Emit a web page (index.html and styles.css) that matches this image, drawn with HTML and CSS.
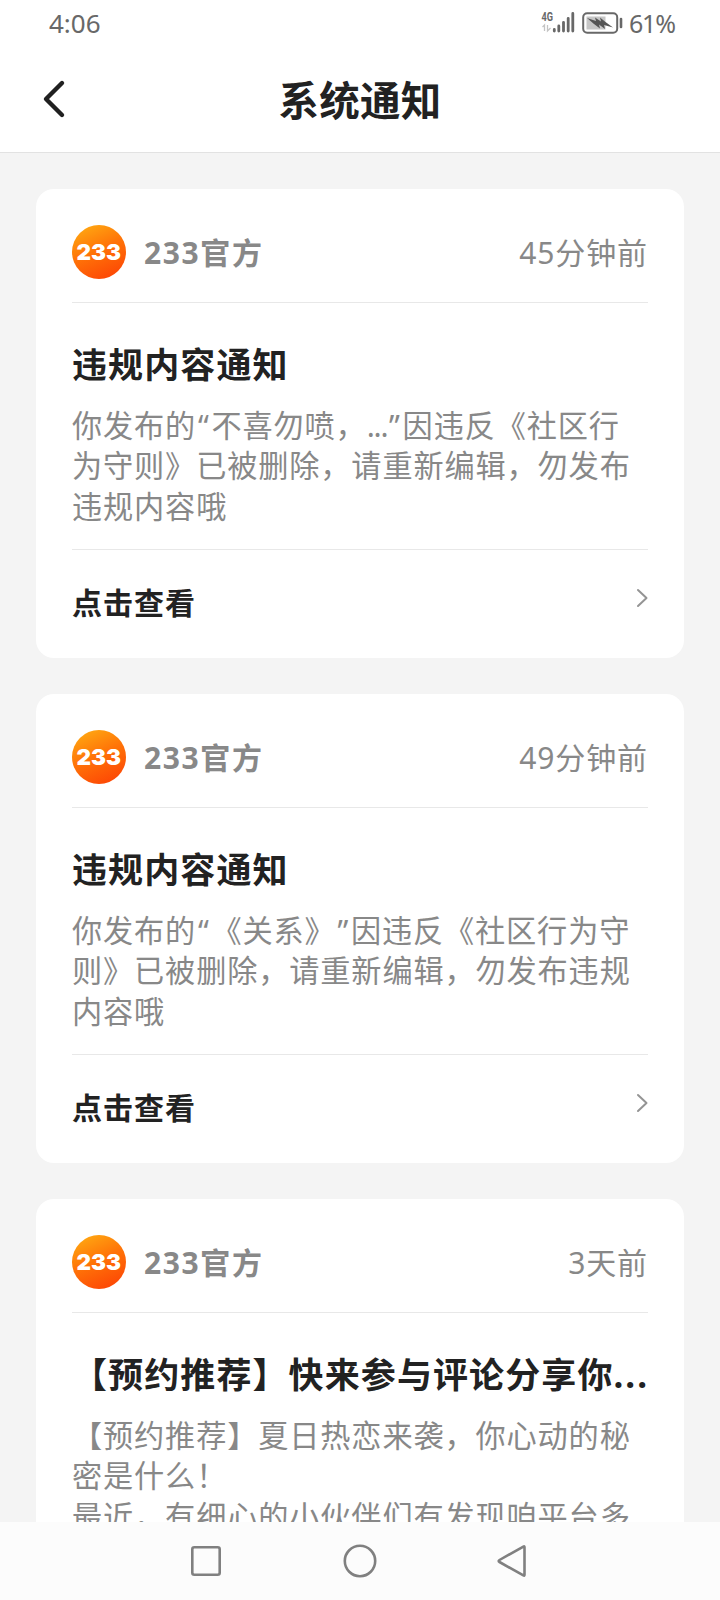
FILE: index.html
```html
<!DOCTYPE html>
<html lang="zh-CN">
<head>
<meta charset="utf-8">
<title>系统通知</title>
<link rel="stylesheet" href="styles.css">
</head>
<body>
<svg width="0" height="0" class="defs">
  <defs>
    <linearGradient id="orange" x1="0.15" y1="0" x2="0.6" y2="1">
      <stop offset="0" stop-color="#ffab12"/>
      <stop offset="0.5" stop-color="#ff7408"/>
      <stop offset="1" stop-color="#fd4a05"/>
    </linearGradient>
    <symbol id="logo" viewBox="0 0 54 54">
      <circle cx="27" cy="27" r="27" fill="url(#orange)"/>
      <text x="4.5" y="35.3" textLength="44.5" lengthAdjust="spacingAndGlyphs" class="logo-text">233</text>
    </symbol>
    <symbol id="chevron" viewBox="0 0 12 20">
      <path d="M2 2L10.500 10L2 18" fill="none" stroke="#949494" stroke-width="2" stroke-linecap="round" stroke-linejoin="round"/>
    </symbol>
  </defs>
</svg>
<div class="screen">
  <div class="status">
    <span class="clock">4:06</span>
    <div class="indicators">
      <svg width="36" height="24" viewBox="0 0 36 24">
        <text x="0.5" y="9.5" textLength="11.5" lengthAdjust="spacingAndGlyphs" class="net">4G</text>
        <path d="M3.5 20v-6l-2 2M6.5 14v6l3-3" fill="none" stroke="#c4c4c4" stroke-width="1.3"/>
        <path d="M13.3 18.5v1.5M17.8 15v5M22.5 11.3v8.700M27.200 7.300v12.700M31.800 2.500v17.500" fill="none" stroke="#686868" stroke-width="2.800" stroke-linecap="round"/>
      </svg>
      <svg class="battery" width="42" height="24" viewBox="0 0 42 24">
        <rect x="1.200" y="2.200" width="34" height="19.600" rx="4" fill="#fff" stroke="#686868" stroke-width="2"/>
        <rect x="4.500" y="5.500" width="19" height="13" fill="#c6c6c6"/>
        <path d="M5 7L14 10L13 6.500L19 10.500L18 6.500L23.500 11L31 16.500L22 14L23 18L17 13.500L18 17.500L12 13Z" fill="#555"/>
        <path d="M39 8v8" stroke="#686868" stroke-width="2.600" stroke-linecap="round"/>
      </svg>
      <span class="percent">61%</span>
    </div>
  </div>
  <header class="header">
    <svg class="back" width="24" height="40" viewBox="0 0 24 40">
      <path d="M20 4L4 20L20 36" fill="none" stroke="#202020" stroke-width="4.400" stroke-linecap="round" stroke-linejoin="round"/>
    </svg>
    <h1 class="heading">系统通知</h1>
  </header>
  <main class="list">
    <article class="card">
      <div class="sender">
        <svg class="avatar"><use href="#logo"/></svg>
        <span class="name">233官方</span>
        <span class="time">45分钟前</span>
      </div>
      <div class="content">
        <h2 class="title">违规内容通知</h2>
        <p class="text">你发布的<span class="quote">“</span>不喜勿喷，<span class="omitted">...</span><span class="quote">”</span>因违反《社区行<br>为守则》已被删除，请重新编辑，勿发布<br>违规内容哦</p>
      </div>
      <div class="action"><span>点击查看</span><svg class="arrow"><use href="#chevron"/></svg></div>
    </article>
    <article class="card">
      <div class="sender">
        <svg class="avatar"><use href="#logo"/></svg>
        <span class="name">233官方</span>
        <span class="time">49分钟前</span>
      </div>
      <div class="content">
        <h2 class="title">违规内容通知</h2>
        <p class="text">你发布的<span class="quote">“</span>《关系》<span class="quote">”</span>因违反《社区行为守<br>则》已被删除，请重新编辑，勿发布违规<br>内容哦</p>
      </div>
      <div class="action"><span>点击查看</span><svg class="arrow"><use href="#chevron"/></svg></div>
    </article>
    <article class="card">
      <div class="sender">
        <svg class="avatar"><use href="#logo"/></svg>
        <span class="name">233官方</span>
        <span class="time">3天前</span>
      </div>
      <div class="content">
        <h2 class="title">【预约推荐】快来参与评论分享你<span class="dots">...</span></h2>
        <p class="text">【预约推荐】夏日热恋来袭，你心动的秘<br>密是什么！<br>最近，有细心的小伙伴们有发现咱平台多</p>
      </div>
    </article>
  </main>
  <nav class="nav">
    <svg width="34" height="34" viewBox="0 0 34 34"><rect x="3.300" y="3.300" width="27.400" height="27.400" rx="2" class="key"/></svg>
    <svg width="34" height="34" viewBox="0 0 34 34"><circle cx="17" cy="17" r="15.200" class="key"/></svg>
    <svg width="34" height="34" viewBox="0 0 34 34"><path d="M27.500 3.200V30.800Q27.500 32 26.400 31.400L2.500 18Q0.800 17 2.500 16L26.400 2.600Q27.500 2 27.500 3.200Z" class="key"/></svg>
  </nav>
</div>
</body>
</html>
```

FILE: styles.css
```css
* { box-sizing: border-box; }
body {
  margin: 0;
  background: #f4f4f4;
  font-family: "Noto Sans", "Noto Sans CJK SC", sans-serif;
  text-spacing-trim: space-all;
}
.defs { position: absolute; }
.screen {
  display: flex;
  flex-direction: column;
  width: 720px;
  height: 1600px;
  overflow: hidden;
}
.status {
  display: flex;
  flex: none;
  align-items: center;
  justify-content: space-between;
  height: 48px;
  padding: 0 46px 2px 49px;
  background: #fff;
  color: #686868;
  font-family: "Noto Sans", sans-serif;
  font-size: 26px;
  line-height: 46px;
}
.clock { letter-spacing: 0; }
.indicators { display: flex; align-items: center; }
.battery { margin-left: 5px; }
.percent { width: 45px; margin-left: 5px; font-size: 25px; letter-spacing: -1.2px; }
.net { font: 700 12px "Roboto", sans-serif; fill: #686868; }
.header {
  display: grid;
  flex: none;
  grid-template-columns: 80px 1fr 80px;
  align-items: center;
  height: 105px;
  background: #fff;
  border-bottom: 1px solid #e2e2e2;
}
.back { margin: 0 0 2px 42px; }
.heading {
  margin: 0;
  padding-top: 2px;
  color: #222;
  font-size: 40.5px;
  line-height: 60px;
  letter-spacing: 0.3px;
  text-align: center;
}
.list {
  display: flex;
  flex: 1;
  flex-direction: column;
  gap: 36px;
  min-height: 0;
  padding: 36px 36px 0;
  overflow: hidden;
}
.card {
  flex: none;
  height: 469px;
  padding: 0 36px;
  background: #fff;
  border-radius: 18px;
}
.sender {
  display: flex;
  align-items: center;
  height: 114px;
  padding-top: 12px;
  border-bottom: 1px solid #e8e8e8;
  color: #888;
  font-size: 30px;
  line-height: 44px;
  letter-spacing: 0.9px;
}
.avatar { width: 54px; height: 54px; }
.logo-text { font: 900 22px "Inter", sans-serif; letter-spacing: 0; fill: #fff; }
.name, .time { padding-top: 3px; }
.name { flex: 1; margin-left: 18px; font-weight: 700; letter-spacing: 1.6px; }
.content {
  height: 247px;
  padding-top: 38px;
  border-bottom: 1px solid #e8e8e8;
  white-space: nowrap;
}
.title {
  margin: 0;
  color: #222;
  font-size: 35px;
  line-height: 48px;
  letter-spacing: 1.1px;
}
.dots { letter-spacing: 2px; }
.text {
  margin: 17px 0 0;
  color: #888;
  font-size: 30.2px;
  line-height: 40.3px;
  letter-spacing: 0.85px;
}
.quote { padding: 0 1.8px; }
.omitted { letter-spacing: -1.2px; }
.action {
  display: flex;
  align-items: center;
  justify-content: space-between;
  height: 107px;
  padding-bottom: 2px;
  color: #222;
  font-size: 30px;
  font-weight: 700;
  line-height: 44px;
  letter-spacing: 1px;
}
.arrow { width: 12px; height: 20px; margin-bottom: 10px; }
.nav {
  display: flex;
  flex: none;
  align-items: center;
  justify-content: center;
  gap: 120px;
  height: 78px;
  background: #fcfcfc;
}
.key { fill: none; stroke: #808080; stroke-width: 2.600; stroke-linejoin: round; }
```
